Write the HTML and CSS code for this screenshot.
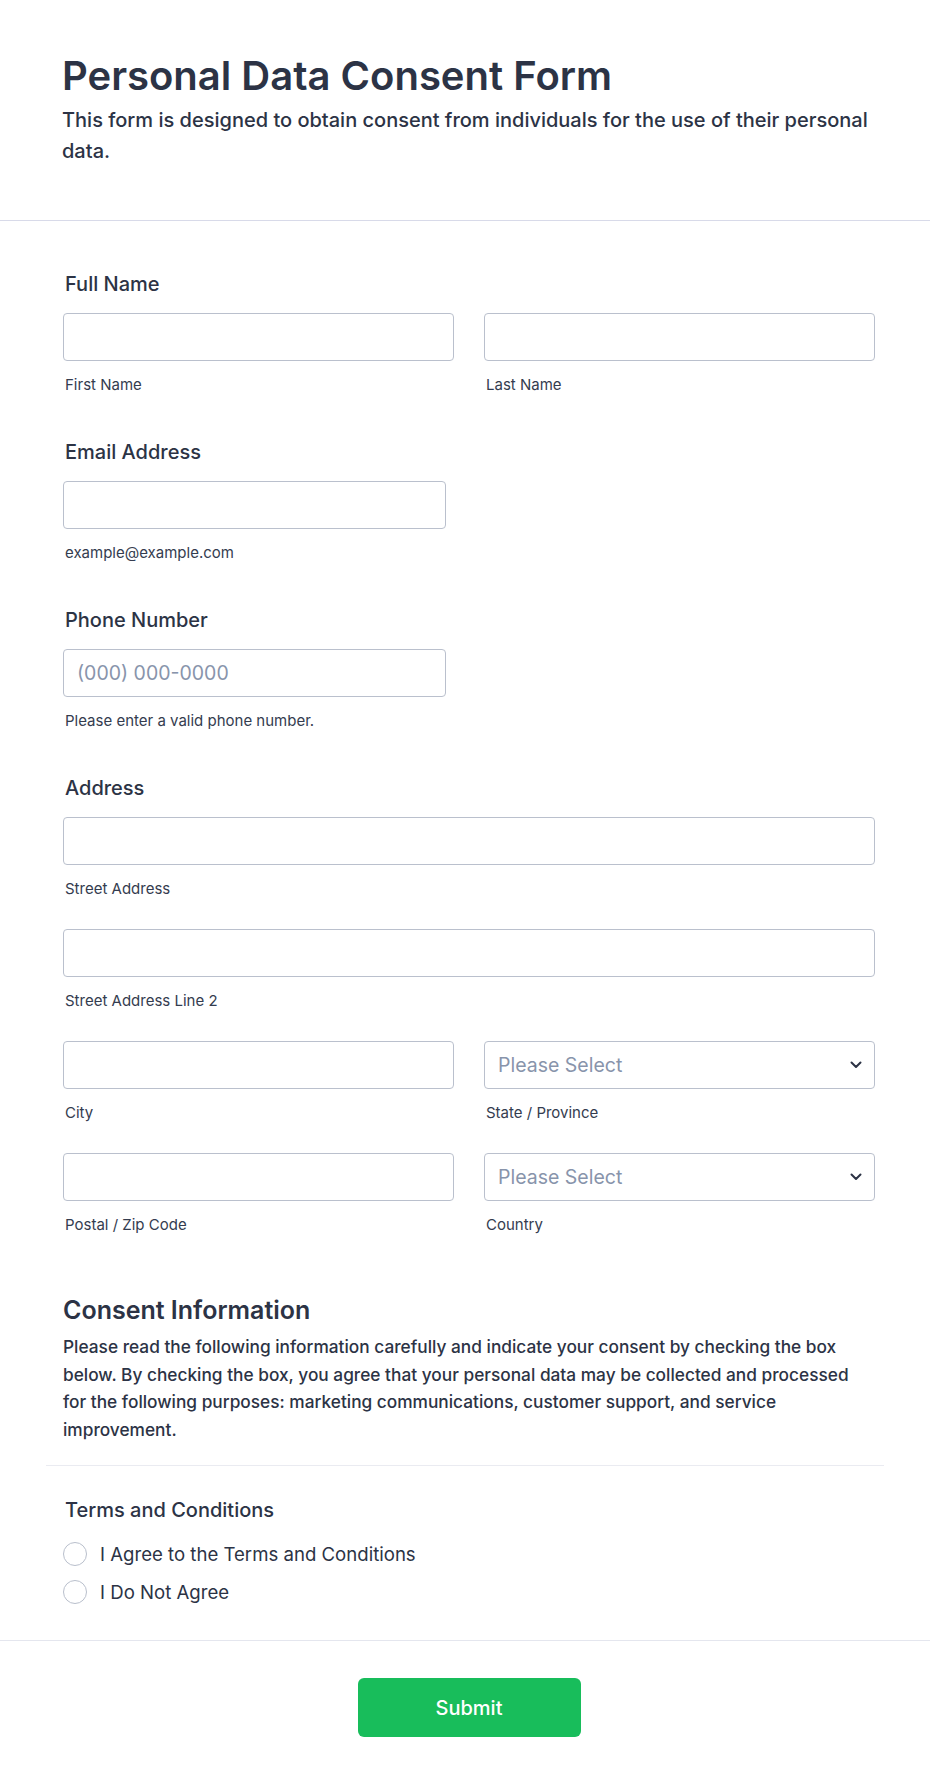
FILE: index.html
```html
<!DOCTYPE html>
<html lang="en">
<head>
    <meta charset="UTF-8">
    <meta name="viewport" content="width=device-width, initial-scale=1.0">
    <title>Personal Data Consent Form</title>
    <link rel="stylesheet" href="styles.css">
</head>
<body>
<form class="form-all" onsubmit="return false;">
    <div class="form-header">
        <h1 class="form-title">Personal Data Consent Form</h1>
        <div class="form-subtitle">This form is designed to obtain consent from individuals for the use of their personal data.</div>
    </div>

    <div class="form-body">
        <!-- Full name -->
        <div class="field">
            <label class="field-label">Full Name</label>
            <div class="row-2">
                <div class="sub-field">
                    <input type="text" class="text-input">
                    <span class="sub-label">First Name</span>
                </div>
                <div class="sub-field">
                    <input type="text" class="text-input">
                    <span class="sub-label">Last Name</span>
                </div>
            </div>
        </div>

        <!-- Email -->
        <div class="field">
            <label class="field-label">Email Address</label>
            <div class="sub-field narrow">
                <input type="email" class="text-input">
                <span class="sub-label">example@example.com</span>
            </div>
        </div>

        <!-- Phone -->
        <div class="field">
            <label class="field-label">Phone Number</label>
            <div class="sub-field narrow">
                <input type="tel" class="text-input" placeholder="(000) 000-0000">
                <span class="sub-label">Please enter a valid phone number.</span>
            </div>
        </div>

        <!-- Address -->
        <div class="field">
            <label class="field-label">Address</label>
            <div class="address-grid">
                <div class="sub-field full">
                    <input type="text" class="text-input">
                    <span class="sub-label">Street Address</span>
                </div>
                <div class="sub-field full">
                    <input type="text" class="text-input">
                    <span class="sub-label">Street Address Line 2</span>
                </div>
                <div class="sub-field">
                    <input type="text" class="text-input">
                    <span class="sub-label">City</span>
                </div>
                <div class="sub-field">
                    <div class="select-wrap">
                        <select class="select-input">
                            <option>Please Select</option>
                        </select>
                        <svg class="chevron" width="12" height="8" viewBox="0 0 12 8"><path d="M1.5 1.5 6 6l4.5-4.5" fill="none" stroke="#2c3345" stroke-width="2" stroke-linecap="round" stroke-linejoin="round"/></svg>
                    </div>
                    <span class="sub-label">State / Province</span>
                </div>
                <div class="sub-field">
                    <input type="text" class="text-input">
                    <span class="sub-label">Postal / Zip Code</span>
                </div>
                <div class="sub-field">
                    <div class="select-wrap">
                        <select class="select-input">
                            <option>Please Select</option>
                        </select>
                        <svg class="chevron" width="12" height="8" viewBox="0 0 12 8"><path d="M1.5 1.5 6 6l4.5-4.5" fill="none" stroke="#2c3345" stroke-width="2" stroke-linecap="round" stroke-linejoin="round"/></svg>
                    </div>
                    <span class="sub-label">Country</span>
                </div>
            </div>
        </div>

        <!-- Consent text -->
        <div class="consent">
            <h2 class="consent-title">Consent Information</h2>
            <p class="consent-text">Please read the following information carefully and indicate your consent by checking the box below. By checking the box, you agree that your personal data may be collected and processed for the following purposes: marketing communications, customer support, and service improvement.</p>
        </div>

        <div class="field terms">
            <label class="field-label">Terms and Conditions</label>
            <div class="radio-list">
                <label class="radio-row"><input type="radio" name="terms"> I Agree to the Terms and Conditions</label>
                <label class="radio-row"><input type="radio" name="terms"> I Do Not Agree</label>
            </div>
        </div>
    </div>

    <div class="form-footer">
        <button type="submit" class="submit-btn">Submit</button>
    </div>
</form>
</body>
</html>
```

FILE: styles.css
```css
body {
    margin: 0;
    background-color: #fff;
    font-family: Inter, "Noto Sans", sans-serif;
    color: #2c3345;
}

.form-all {
    width: 930px;
}

/* Header */
.form-header {
    padding: 52px 40px 53px 62px;
    border-bottom: 1px solid #d8dae9;
}

.form-title {
    margin: 0;
    font-size: 40px;
    line-height: 48px;
    font-weight: 600;
}

.form-subtitle {
    margin-top: 5px;
    font-size: 20px;
    line-height: 31px;
    font-weight: 500;
}

/* Body */
.form-body {
    padding: 51px 46px 0 46px;
}

.field {
    padding: 0 9px 0 17px;
    margin-bottom: 45px;
}

.field-label {
    display: block;
    padding-left: 2px;
    font-size: 20px;
    line-height: 24px;
    font-weight: 500;
    margin-bottom: 17px;
}

.row-2,
.address-grid {
    display: grid;
    grid-template-columns: 1fr 1fr;
    column-gap: 30px;
}

.address-grid {
    row-gap: 30px;
}

.sub-field {
    display: flex;
    flex-direction: column;
}

.sub-field.narrow {
    width: 383px;
}

.sub-field.full {
    grid-column: 1 / 3;
}

.text-input,
.select-input {
    box-sizing: border-box;
    height: 48px;
    width: 100%;
    border: 1px solid #bac0cd;
    border-radius: 4px;
    background: #fff;
    padding: 0 13px;
    font-family: inherit;
    font-size: 19.5px;
    color: #2c3345;
    outline: none;
}

.text-input::placeholder {
    color: #8894ab;
}

.select-wrap {
    position: relative;
}

.select-input {
    appearance: none;
    -webkit-appearance: none;
    color: #8894ab;
}

.chevron {
    position: absolute;
    right: 13px;
    top: 20px;
}

.sub-label {
    display: block;
    margin-top: 13px;
    padding-left: 2px;
    font-size: 15px;
    line-height: 21px;
    color: #343c4f;
}

/* Consent block */
.consent {
    padding: 15px 9px 22px 17px;
    border-bottom: 1px solid #eaebf1;
}

.consent-title {
    margin: 0;
    font-size: 25px;
    line-height: 30px;
    font-weight: 600;
}

.consent-text {
    margin: 8px 0 0 0;
    font-size: 17.3px;
    line-height: 27.5px;
    font-weight: 500;
}

.terms {
    padding-top: 32px;
    margin-bottom: 0;
}

.radio-list {
    display: flex;
    flex-direction: column;
    gap: 8px;
}

.radio-row {
    display: flex;
    align-items: center;
    gap: 13px;
    font-size: 18.6px;
    line-height: 30px;
}

.radio-row input {
    appearance: none;
    -webkit-appearance: none;
    margin: 0;
    width: 24px;
    height: 24px;
    border: 1px solid #b9bfcc;
    border-radius: 50%;
    background: #fff;
}

/* Footer */
.form-footer {
    margin-top: 33px;
    border-top: 1px solid #e4e6ee;
    padding: 37px 55px 50px 63px;
    text-align: center;
}

.submit-btn {
    width: 223px;
    height: 59px;
    border: none;
    border-radius: 6px;
    background-color: #18bd5b;
    color: #fff;
    font-family: inherit;
    font-size: 20px;
    font-weight: 500;
}
```
